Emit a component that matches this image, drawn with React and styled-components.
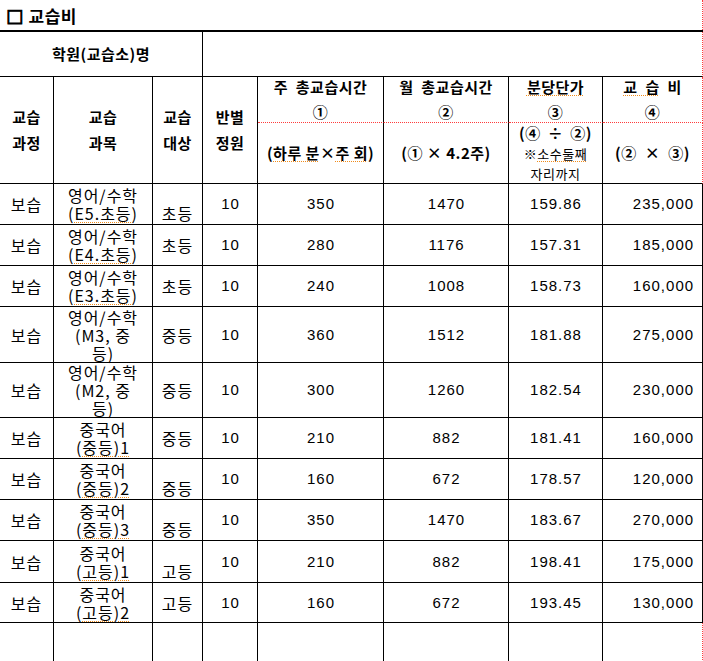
import React from "react";
import styled, { createGlobalStyle } from "styled-components";

const GlobalStyle = createGlobalStyle`
  html, body { margin: 0; padding: 0; background: #fff; }
  body { font-family: "Noto Sans CJK KR", sans-serif; color: #000; }
`;

const KR = `"Noto Sans CJK KR", sans-serif`;
const NUM = `"Liberation Sans", "Noto Sans CJK KR", sans-serif`;
const GUIDE = "#ff3c3c";

const Page = styled.div`
  width: 703px;
  font-family: ${KR};
`;

const Title = styled.div`
  height: 30px;
  box-sizing: border-box;
  padding-left: 6px;
  display: flex;
  align-items: center;
  gap: 5px;
  font-family: ${KR};
  font-size: 17px;
  font-weight: 700;
  letter-spacing: 0.5px;
  border-right: 1px dotted ${GUIDE};
`;

const Box = styled.span`
  font-family: "DejaVu Sans", sans-serif;
  font-weight: 700;
  font-size: 18px;
  -webkit-text-stroke: 0.9px #000;
`;

const Table = styled.table`
  width: 703px;
  table-layout: fixed;
  border-collapse: separate;
  border-spacing: 0;
  border-top: 2px solid #000;
`;

const Row = styled.tr`
  height: ${(p) => p.$h}px;
`;

const Cell = styled.td`
  padding: 0;
  border-right: 1px solid #000;
  border-bottom: 1px solid #000;
  text-align: center;
  vertical-align: middle;
  font-family: ${KR};
  font-size: 16px;
  line-height: 18px;
  letter-spacing: 1px;
  white-space: nowrap;
`;

const HeadCell = styled(Cell)`
  font-weight: 700;
  font-size: 15px;
  line-height: 26px;
  letter-spacing: 0.5px;
  ${(p) => p.$guide && `border-right: 1px dotted ${GUIDE};`}
  ${(p) => p.$dotted && `border-bottom: 1px dotted ${GUIDE};`}
  ${(p) => p.$top && `vertical-align: top;`}
`;

const BlankCell = styled(Cell)`
  ${(p) => p.$guide && `border-right: 1px dotted ${GUIDE};`}
`;

const NumCell = styled(Cell)`
  font-family: ${NUM};
  font-size: 15px;
  letter-spacing: 1px;
  ${(p) => (p.$right ? `text-align: right; padding-right: 8px;` : `padding-left: 1px;`)}
`;

const TargetCell = styled(Cell)`
  ${(p) => p.$low && `vertical-align: bottom; padding-bottom: 2px;`}
`;

const Line = styled.div`
  line-height: ${(p) => p.$lh || 18}px;
  ${(p) => p.$pt && `padding-top: ${p.$pt}px;`}
  ${(p) => p.$small && `font-size: 13px; font-weight: 400;`}
`;

const Mark = styled.span`
  text-decoration: underline dotted #f08c1c;
  text-decoration-thickness: 1px;
  text-underline-offset: 2px;
`;

const Gap = styled.span`
  display: inline-block;
  width: ${(p) => p.$w || 8}px;
`;

const widths = [54, 99, 50, 55, 126, 125, 94, 100];

const data = [
  { h: 41, subject: ["영어/수학", <>(<Mark>E5.초등</Mark>)</>], target: "초등", low: true, week: 350, month: 1470, unit: "159.86", fee: "235,000" },
  { h: 41, subject: ["영어/수학", <>(<Mark>E4.초등</Mark>)</>], target: "초등", week: 280, month: 1176, unit: "157.31", fee: "185,000" },
  { h: 41, subject: ["영어/수학", <>(<Mark>E3.초등</Mark>)</>], target: "초등", week: 240, month: 1008, unit: "158.73", fee: "160,000" },
  { h: 56, subject: ["영어/수학", "(M3, 중", "등)"], target: "중등", week: 360, month: 1512, unit: "181.88", fee: "275,000" },
  { h: 55, subject: ["영어/수학", "(M2, 중", "등)"], target: "중등", week: 300, month: 1260, unit: "182.54", fee: "230,000" },
  { h: 41, subject: ["중국어", <>(<Mark>중등)1</Mark></>], target: "중등", week: 210, month: 882, unit: "181.41", fee: "160,000" },
  { h: 41, subject: ["중국어", <>(<Mark>중등)2</Mark></>], target: "중등", low: true, week: 160, month: 672, unit: "178.57", fee: "120,000" },
  { h: 41, subject: ["중국어", <>(<Mark>중등)3</Mark></>], target: "중등", low: true, week: 350, month: 1470, unit: "183.67", fee: "270,000" },
  { h: 42, subject: ["중국어", <>(<Mark>고등)1</Mark></>], target: "고등", low: true, week: 210, month: 882, unit: "198.41", fee: "175,000" },
  { h: 40, subject: ["중국어", <>(<Mark>고등)2</Mark></>], target: "고등", week: 160, month: 672, unit: "193.45", fee: "130,000" },
];

export default function App() {
  return (
    <Page>
      <GlobalStyle />
      <Title>
        <Box>□</Box>
        <span>교습비</span>
      </Title>
      <Table>
        <colgroup>
          {widths.map((w, i) => (
            <col key={i} style={{ width: w }} />
          ))}
        </colgroup>
        <tbody>
          <Row $h={45}>
            <HeadCell colSpan={3}>학원(교습소)명</HeadCell>
            <HeadCell colSpan={5} $guide />
          </Row>
          <Row $h={46}>
            <HeadCell rowSpan={2}>
              <Line $lh={26}>교습</Line>
              <Line $lh={26}>과정</Line>
            </HeadCell>
            <HeadCell rowSpan={2}>
              <Line $lh={26}>교습</Line>
              <Line $lh={26}>과목</Line>
            </HeadCell>
            <HeadCell rowSpan={2}>
              <Line $lh={26}>교습</Line>
              <Line $lh={26}>대상</Line>
            </HeadCell>
            <HeadCell rowSpan={2}>
              <Line $lh={26}>반별</Line>
              <Line $lh={26}>정원</Line>
            </HeadCell>
            <HeadCell $top $dotted>
              <Line $lh={20}>주&nbsp; 총교습시간</Line>
              <Line $lh={20} $pt={5}>①</Line>
            </HeadCell>
            <HeadCell $top $dotted>
              <Line $lh={20}>월&nbsp; 총교습시간</Line>
              <Line $lh={20} $pt={5}>②</Line>
            </HeadCell>
            <HeadCell $top $dotted>
              <Line $lh={20}><Mark>분당단가</Mark></Line>
              <Line $lh={20} $pt={5}>③</Line>
            </HeadCell>
            <HeadCell $top $dotted $guide>
              <Line $lh={20}><Mark>교&nbsp; 습</Mark>&nbsp; 비</Line>
              <Line $lh={20} $pt={5}>④</Line>
            </HeadCell>
          </Row>
          <Row $h={61}>
            <HeadCell>
              <Line $lh={22}>(<Mark>하루 분</Mark>×<Mark>주 회</Mark>)</Line>
            </HeadCell>
            <HeadCell>
              <Line $lh={22}>(① × 4.2주)</Line>
            </HeadCell>
            <HeadCell>
              <Line $lh={20}>(④<Gap $w={7} />÷<Gap $w={7} />②)</Line>
              <Line $lh={21} $small>※<Mark>소수둘째</Mark></Line>
              <Line $lh={19} $small>자리까지</Line>
            </HeadCell>
            <HeadCell $guide>
              <Line $lh={22}>(②<Gap $w={8} />×<Gap $w={8} />③)</Line>
            </HeadCell>
          </Row>
          {data.map((r, i) => (
            <Row key={i} $h={r.h}>
              <Cell>보습</Cell>
              <Cell>
                {r.subject.map((s, j) => (
                  <Line key={j}>{s}</Line>
                ))}
              </Cell>
              <TargetCell $low={r.low}>
                <Line>{r.target}</Line>
              </TargetCell>
              <NumCell>10</NumCell>
              <NumCell>{r.week}</NumCell>
              <NumCell>{r.month}</NumCell>
              <NumCell>{r.unit}</NumCell>
              <NumCell $right>{r.fee}</NumCell>
            </Row>
          ))}
          <Row $h={45}>
            <BlankCell />
            <BlankCell />
            <BlankCell />
            <BlankCell />
            <BlankCell />
            <BlankCell />
            <BlankCell />
            <BlankCell $guide />
          </Row>
        </tbody>
      </Table>
    </Page>
  );
}
